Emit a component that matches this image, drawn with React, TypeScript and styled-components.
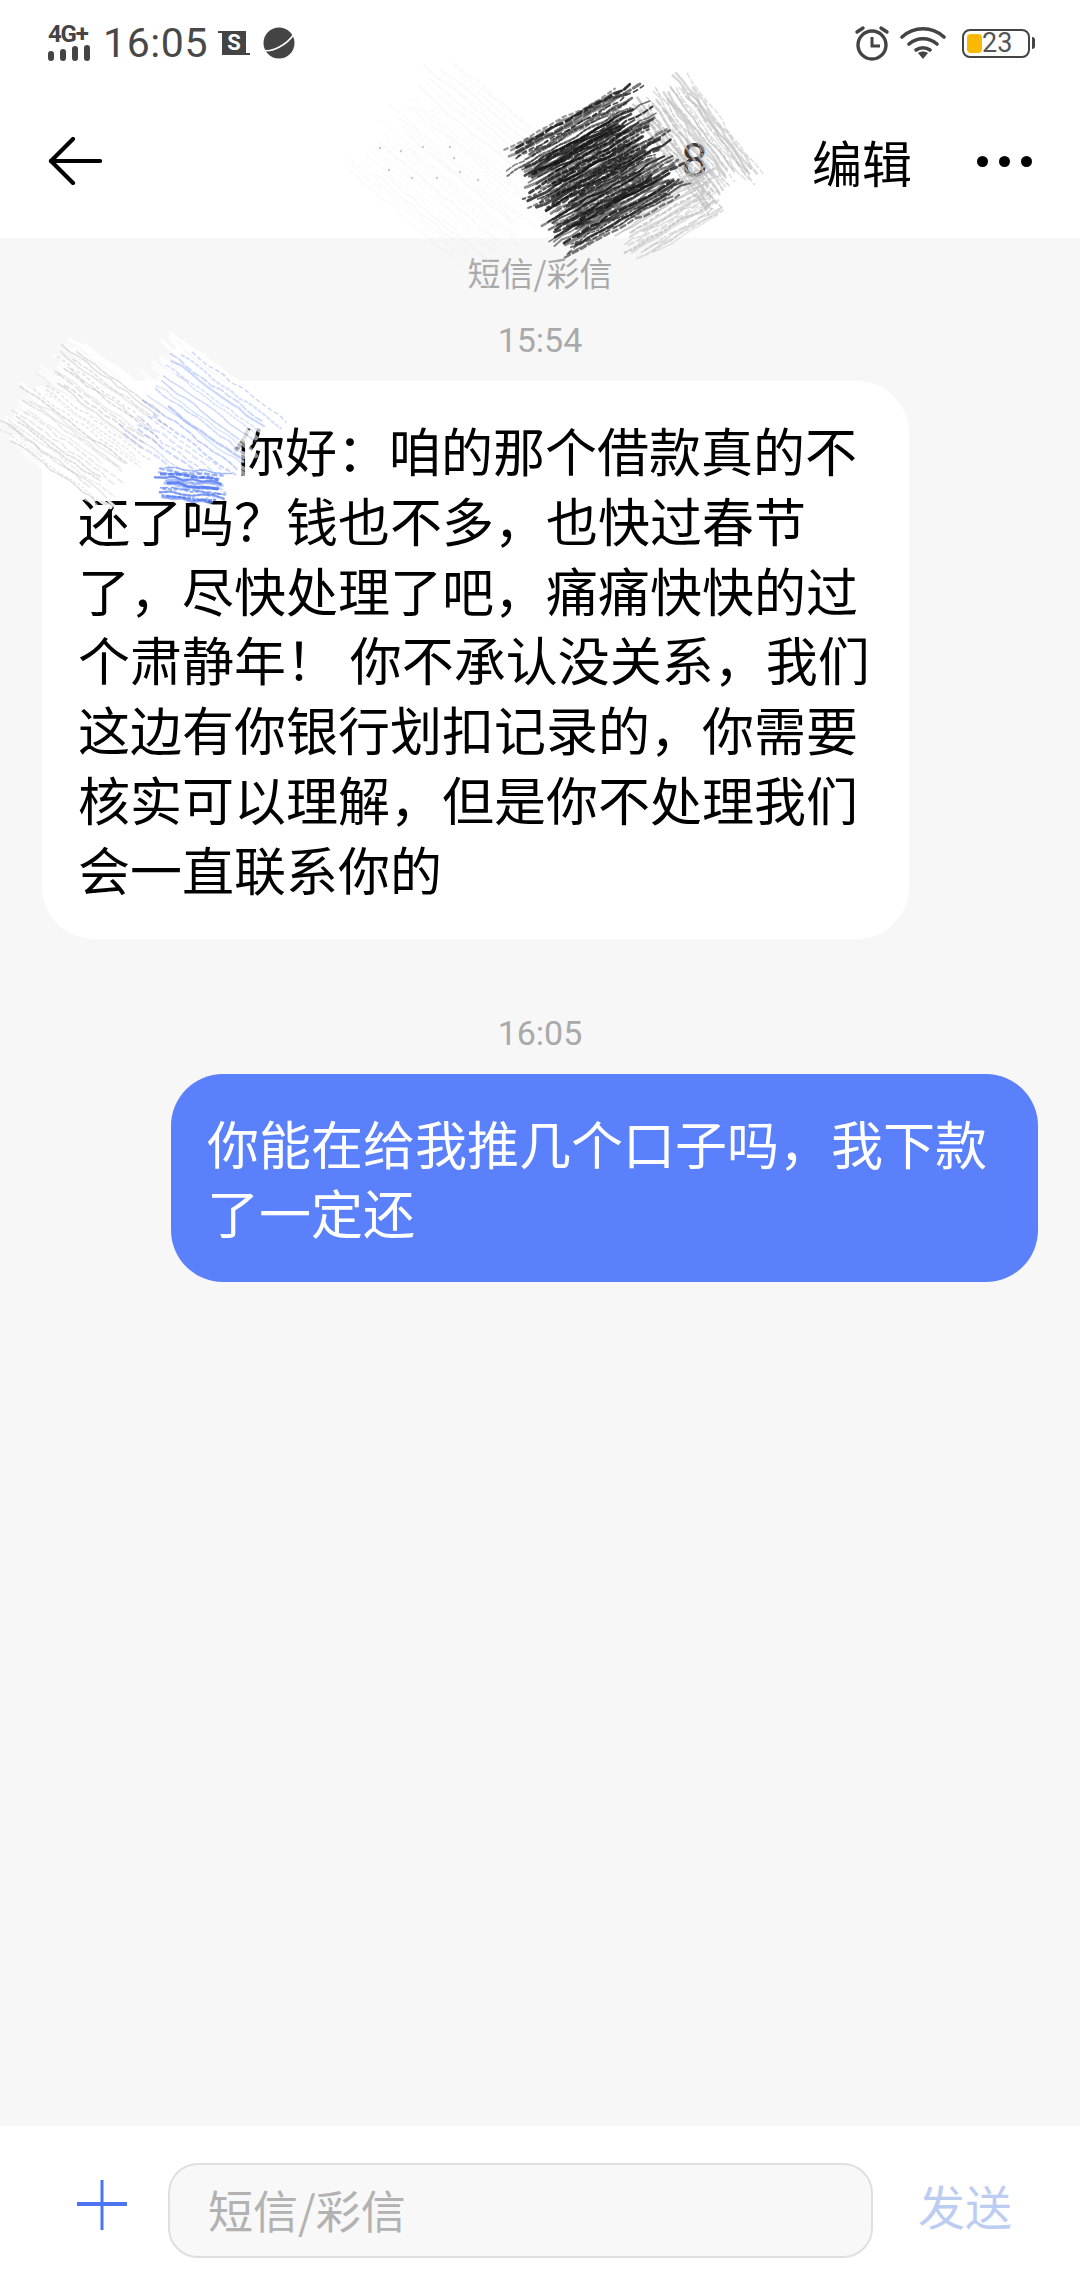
import React, { useMemo } from 'react'
import styled, { createGlobalStyle } from 'styled-components'

const CJK = '"Noto Sans CJK SC", "Noto Sans", sans-serif'
const LATIN = 'Roboto, "Liberation Sans", sans-serif'

const GlobalStyle = createGlobalStyle`
  html, body {
    margin: 0;
    padding: 0;
    background: #f7f7f7;
  }
  * {
    box-sizing: border-box;
  }
`

const Page = styled.div`
  position: relative;
  width: 1080px;
  height: 2280px;
  overflow: hidden;
  display: flex;
  flex-direction: column;
  background: #f7f7f7;
  font-family: ${CJK};
`

const Header = styled.header`
  height: 238px;
  background: #fff;
  display: flex;
  flex-direction: column;
`

const StatusBar = styled.div`
  height: 84px;
  padding: 23px 50px 0 48px;
  display: flex;
  align-items: flex-start;
  justify-content: space-between;
  color: #444;
`

const StatusGroup = styled.div`
  display: flex;
  align-items: center;
  height: 40px;
`

const SignalWrap = styled.div`
  width: 42px;
  display: flex;
  flex-direction: column;
  gap: 2px;
  margin-right: 13px;
`

const NetworkLabel = styled.span`
  font: 700 24px/18px ${LATIN};
  letter-spacing: -1.2px;
  white-space: nowrap;
`

const Clock = styled.span`
  font: 400 41px/40px ${LATIN};
  letter-spacing: 0.6px;
  margin-right: 14px;
  color: #484848;
`

const ScreenshotBadge = styled.div`
  position: relative;
  width: 24px;
  height: 24px;
  margin-right: 16px;
  background: #444;
  color: #fff;
  display: flex;
  align-items: center;
  justify-content: center;
  font: 700 22px/22px ${LATIN};

  &::before {
    content: '';
    position: absolute;
    left: -4px;
    top: 0;
    width: 5px;
    height: 2px;
    background: #444;
  }

  &::after {
    content: '';
    position: absolute;
    right: -4px;
    bottom: 0;
    width: 6px;
    height: 2px;
    background: #444;
  }
`

const Battery = styled.div`
  width: 68px;
  height: 29px;
  margin-left: 16px;
  border: 2.5px solid #444;
  border-radius: 8px;
  padding: 3px;
  display: flex;
  align-items: center;
  position: relative;

  &::after {
    content: '';
    position: absolute;
    right: -7px;
    top: 6px;
    width: 3px;
    height: 12px;
    border-radius: 0 3px 3px 0;
    background: #444;
  }
`

const BatteryFill = styled.div<{ $width: number }>`
  width: ${p => p.$width}px;
  height: 100%;
  background: #fbb800;
  border-radius: 4px;
`

const BatteryText = styled.span`
  font: 400 27px/22px ${LATIN};
  color: #555;
`

const NavBar = styled.div`
  flex: 1;
  display: flex;
  align-items: center;
  padding: 0 48px;
  color: #000;
`

const EditButton = styled.span`
  font-size: 50px;
  line-height: 60px;
  font-weight: 400;
  margin-right: 65px;
`

const Title = styled.div`
  flex: 1;
  padding-right: 104px;
  text-align: right;
  font: 400 48px/50px ${LATIN};
  color: #3a3a3a;
`

const Dots = styled.div`
  display: flex;
  gap: 11px;
`

const Dot = styled.span`
  width: 11px;
  height: 11px;
  border-radius: 50%;
  background: #000;
`

const Thread = styled.main`
  flex: 1;
  display: flex;
  flex-direction: column;
  padding: 14px 42px 0;
`

const Caption = styled.div<{ $top: number }>`
  margin-top: ${p => p.$top}px;
  text-align: center;
  height: 40px;
  line-height: 40px;
  color: #a9a9a9;
`

const ChannelCaption = styled(Caption)`
  font-size: 33px;
  font-family: ${CJK};
`

const TimeCaption = styled(Caption)`
  font-size: 34px;
  font-family: ${LATIN};
`

const Bubble = styled.div<{ $mine?: boolean }>`
  width: 867px;
  margin-top: 21px;
  padding: 34px 20px 35px 36px;
  border-radius: 52px;
  font-size: 52px;
  line-height: 69.8px;
  white-space: nowrap;
  font-weight: 400;
  align-self: ${p => (p.$mine ? 'flex-end' : 'flex-start')};
  background: ${p => (p.$mine ? '#5b80fb' : '#fff')};
  color: ${p => (p.$mine ? '#fff' : '#000')};
`

const Line = styled.div<{ $indent?: number }>`
  padding-left: ${p => p.$indent ?? 0}px;
`

const Composer = styled.footer`
  height: 154px;
  background: #fff;
  display: flex;
  align-items: flex-start;
  padding: 37px 0 0 76px;
`

const AddIcon = styled.svg`
  width: 52px;
  height: 52px;
  margin: 16px 40px 0 0;
`

const InputBox = styled.div`
  width: 705px;
  height: 95px;
  padding: 0 38px 2px;
  border: 2px solid #dfdfdf;
  border-radius: 30px;
  background: #f8f8f8;
  display: flex;
  align-items: center;
  font-size: 45px;
  color: #b2b2b2;
`

const SendButton = styled.span`
  margin: 9px 0 0 45px;
  font-size: 47px;
  line-height: 66px;
  color: #bccdf1;
`

const ScribbleLayer = styled.svg`
  position: absolute;
  left: 0;
  top: 0;
  pointer-events: none;
`

type Hatch = {
  cx: number
  cy: number
  length: number
  across: number
  angle: number
  count: number
  color: string
  opacity: number
  width: number
  seed: number
  dash?: boolean
}

// small seeded generator so the pencil marks come out the same each load
const seeded = (start: number) => {
  let s = start
  return () => {
    s = (s * 16807) % 2147483647
    return s / 2147483647
  }
}

const hatchPaths = (h: Hatch) => {
  const rnd = seeded(h.seed * 7919)
  const a = (h.angle * Math.PI) / 180
  const ux = Math.cos(a)
  const uy = Math.sin(a)
  const vx = -uy
  const vy = ux
  const out: { d: string; w: number; o: number; dash?: string }[] = []
  for (let i = 0; i < h.count; i++) {
    const off = (i / (h.count - 1) - 0.5) * h.across + (rnd() - 0.5) * 3
    const half = (h.length / 2) * (0.7 + rnd() * 0.36)
    const shift = (rnd() - 0.5) * h.length * 0.16
    const steps = Math.max(3, Math.round((half * 2) / 10))
    let d = ''
    for (let j = 0; j <= steps; j++) {
      const t = -half + (j / steps) * half * 2 + shift
      const wob = (rnd() - 0.5) * 3
      const x = h.cx + ux * t + vx * (off + wob)
      const y = h.cy + uy * t + vy * (off + wob)
      d += `${j ? 'L' : 'M'}${x.toFixed(1)} ${y.toFixed(1)}`
    }
    out.push({
      d,
      w: h.width * (0.6 + rnd() * 0.8),
      o: h.opacity * (0.5 + rnd() * 0.5),
      dash: h.dash ? `${(2 + rnd() * 6).toFixed(1)} ${(1 + rnd() * 3).toFixed(1)}` : undefined,
    })
  }
  return out
}

const hatches: Hatch[] = [
  // header, faint wash on the left
  { cx: 468, cy: 172, length: 180, across: 150, angle: 40, count: 34, color: '#ececec', opacity: 0.35, width: 2, seed: 11, dash: true },
  // header, grey block right of the dark one
  { cx: 696, cy: 142, length: 125, across: 66, angle: 53, count: 28, color: '#bcbcbc', opacity: 0.8, width: 2.1, seed: 23, dash: true },
  { cx: 672, cy: 214, length: 105, across: 50, angle: -30, count: 22, color: '#c2c2c2', opacity: 0.8, width: 2.1, seed: 37, dash: true },
  // header, dark block
  { cx: 596, cy: 170, length: 140, across: 122, angle: -29, count: 76, color: '#222', opacity: 0.92, width: 2.3, seed: 41, dash: true },
  { cx: 596, cy: 174, length: 100, across: 78, angle: -29, count: 26, color: '#111', opacity: 0.8, width: 2.3, seed: 59, dash: true },
  // bubble, white wash over the corner
  { cx: 90, cy: 425, length: 135, across: 120, angle: 36, count: 44, color: '#ffffff', opacity: 1, width: 4.4, seed: 67 },
  { cx: 195, cy: 425, length: 135, across: 120, angle: 36, count: 44, color: '#ffffff', opacity: 1, width: 4.4, seed: 71 },
  // bubble, grey pencil
  { cx: 85, cy: 425, length: 130, across: 110, angle: 36, count: 30, color: '#a8a8a8', opacity: 0.42, width: 1.5, seed: 73, dash: true },
  // bubble, blue pencil
  { cx: 200, cy: 425, length: 120, across: 105, angle: 36, count: 20, color: '#6388f2', opacity: 0.4, width: 1.9, seed: 83, dash: true },
  { cx: 192, cy: 486, length: 66, across: 30, angle: 6, count: 14, color: '#4a74f2', opacity: 0.85, width: 2.4, seed: 97, dash: true },
]

const specks = [
  [380, 148], [401, 151], [423, 147], [450, 147], [454, 158], [389, 170], [412, 178], [437, 178], [460, 172], [478, 180],
]

const Scribbles = () => {
  const sets = useMemo(() => hatches.map(h => ({ h, paths: hatchPaths(h) })), [])
  return (
    <ScribbleLayer width="1080" height="560" viewBox="0 0 1080 560" fill="none" strokeLinecap="round">
      {specks.map(([x, y]) => (
        <circle key={`${x}-${y}`} cx={x} cy={y} r="1.2" fill="#c8c8c8" />
      ))}
      {sets.map(({ h, paths }) =>
        paths.map((p, i) => (
          <path key={`${h.seed}-${i}`} d={p.d} stroke={h.color} strokeWidth={p.w} strokeOpacity={p.o} strokeDasharray={p.dash} />
        ))
      )}
    </ScribbleLayer>
  )
}

const SignalBars = () => (
  <svg width="42" height="16" viewBox="0 0 42 16" fill="#444">
    <rect x="0" y="6" width="6" height="10" rx="3" />
    <rect x="12" y="4" width="6" height="12" rx="3" />
    <rect x="24" y="1" width="6" height="15" rx="3" />
    <rect x="36" y="0" width="6" height="16" rx="3" />
  </svg>
)

const Planet = () => (
  <svg width="34" height="34" viewBox="0 0 34 34">
    <circle cx="17" cy="17" r="15.5" fill="#444" />
    <path d="M1 24c8 3 24-5 31-16" stroke="#fff" strokeWidth="1.6" fill="none" />
  </svg>
)

const AlarmIcon = () => (
  <svg width="36" height="36" viewBox="0 0 36 36" fill="none" stroke="#444" strokeWidth="3.4" style={{ marginRight: 10 }}>
    <circle cx="18" cy="20" r="14" />
    <path d="M18 12v9h8" strokeWidth="3" />
    <path d="M3 7l6-4M33 7l-6-4" strokeLinecap="round" />
  </svg>
)

const WifiIcon = () => (
  <svg width="46" height="34" viewBox="0 0 46 34" fill="none" stroke="#444" strokeWidth="3.6" strokeLinecap="round">
    <path d="M2 11C14 0 32 0 44 11" />
    <path d="M9 18c8-7 20-7 28 0" />
    <path d="M16 24c4-3 10-3 14 0" />
    <path d="M18 27l5 6 5-6c-3-2-7-2-10 0z" fill="#444" stroke="none" />
  </svg>
)

const BackArrow = () => (
  <svg width="54" height="48" viewBox="0 0 54 48" fill="none" stroke="#000" strokeWidth="4.2" strokeLinecap="round" strokeLinejoin="round">
    <path d="M52 24H3" />
    <path d="M25 2L3 24l22 22" />
  </svg>
)

const App = () => {
  return (
    <Page>
      <GlobalStyle />
      <Header>
        <StatusBar>
          <StatusGroup>
            <SignalWrap>
              <NetworkLabel>4G+</NetworkLabel>
              <SignalBars />
            </SignalWrap>
            <Clock>16:05</Clock>
            <ScreenshotBadge>S</ScreenshotBadge>
            <Planet />
          </StatusGroup>
          <StatusGroup>
            <AlarmIcon />
            <WifiIcon />
            <Battery>
              <BatteryFill $width={15} />
              <BatteryText>23</BatteryText>
            </Battery>
          </StatusGroup>
        </StatusBar>
        <NavBar>
          <BackArrow />
          <Title>8</Title>
          <EditButton>编辑</EditButton>
          <Dots>
            <Dot />
            <Dot />
            <Dot />
          </Dots>
        </NavBar>
      </Header>
      <Thread>
        <ChannelCaption $top={0}>短信/彩信</ChannelCaption>
        <TimeCaption $top={28}>15:54</TimeCaption>
        <Bubble>
          <Line $indent={155}>你好：咱的那个借款真的不</Line>
          <Line>还了吗？钱也不多，也快过春节</Line>
          <Line>了，尽快处理了吧，痛痛快快的过</Line>
          <Line>个肃静年！ 你不承认没关系，我们</Line>
          <Line>这边有你银行划扣记录的，你需要</Line>
          <Line>核实可以理解，但是你不处理我们</Line>
          <Line>会一直联系你的</Line>
        </Bubble>
        <TimeCaption $top={74}>16:05</TimeCaption>
        <Bubble $mine>
          <Line>你能在给我推几个口子吗，我下款</Line>
          <Line>了一定还</Line>
        </Bubble>
      </Thread>
      <Composer>
        <AddIcon viewBox="0 0 52 52" fill="none" stroke="#4a74f0">
          <path d="M26 1v50" strokeWidth="3" />
          <path d="M1 25h50" strokeWidth="4" />
        </AddIcon>
        <InputBox>短信/彩信</InputBox>
        <SendButton>发送</SendButton>
      </Composer>
      <Scribbles />
    </Page>
  )
}

export default App
